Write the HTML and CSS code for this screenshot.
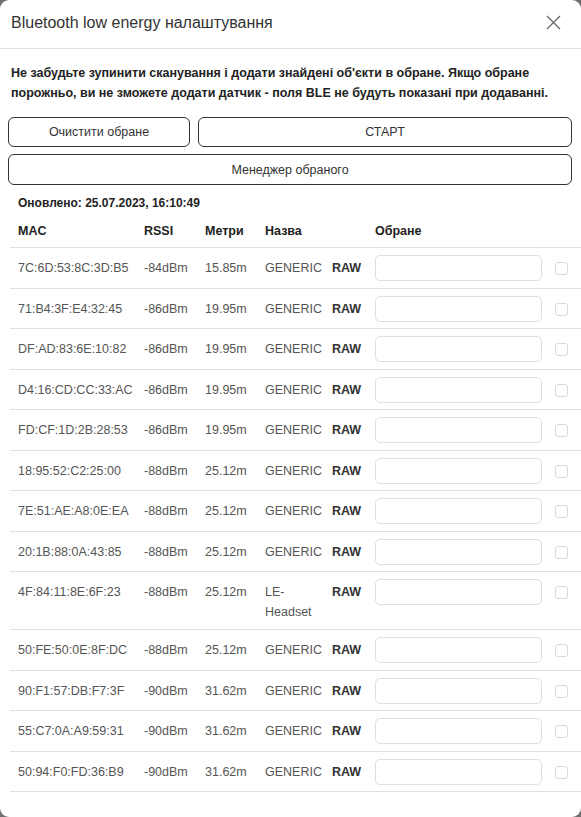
FILE: index.html
```html
<!DOCTYPE html>
<html lang="uk">
<head>
<meta charset="utf-8">
<title>Bluetooth low energy налаштування</title>
<link rel="stylesheet" href="styles.css">
</head>
<body>
<div class="modal">
  <div class="modal-header">
    <div class="modal-title">Bluetooth low energy налаштування</div>
    <button class="close" aria-label="Закрити">
      <svg width="15" height="15" viewBox="0 0 15 15"><path d="M1 1 L14 14 M14 1 L1 14" stroke="#6b6b6b" stroke-width="1.4" fill="none"/></svg>
    </button>
  </div>
  <div class="modal-body">
    <p class="note">Не забудьте зупинити сканування і додати знайдені об'єкти в обране. Якщо обране порожньо, ви не зможете додати датчик - поля BLE не будуть показані при додаванні.</p>
    <div class="btn-row">
      <button class="btn btn-clear">Очистити обране</button>
      <button class="btn btn-start">СТАРТ</button>
    </div>
    <button class="btn btn-block">Менеджер обраного</button>
    <div class="updated">Оновлено: 25.07.2023, 16:10:49</div>
    <table class="devices">
      <colgroup>
        <col class="c-mac"><col class="c-rssi"><col class="c-m"><col class="c-name"><col class="c-raw"><col class="c-in"><col class="c-ck">
      </colgroup>
      <thead>
        <tr><th>MAC</th><th>RSSI</th><th>Метри</th><th>Назва</th><th></th><th>Обране</th><th></th></tr>
      </thead>
      <tbody>
        <tr><td>7C:6D:53:8C:3D:B5</td><td>-84dBm</td><td>15.85m</td><td>GENERIC</td><td class="raw">RAW</td><td class="in"><input type="text"></td><td class="ck"><span class="box"></span></td></tr>
        <tr><td>71:B4:3F:E4:32:45</td><td>-86dBm</td><td>19.95m</td><td>GENERIC</td><td class="raw">RAW</td><td class="in"><input type="text"></td><td class="ck"><span class="box"></span></td></tr>
        <tr><td>DF:AD:83:6E:10:82</td><td>-86dBm</td><td>19.95m</td><td>GENERIC</td><td class="raw">RAW</td><td class="in"><input type="text"></td><td class="ck"><span class="box"></span></td></tr>
        <tr><td>D4:16:CD:CC:33:AC</td><td>-86dBm</td><td>19.95m</td><td>GENERIC</td><td class="raw">RAW</td><td class="in"><input type="text"></td><td class="ck"><span class="box"></span></td></tr>
        <tr><td>FD:CF:1D:2B:28:53</td><td>-86dBm</td><td>19.95m</td><td>GENERIC</td><td class="raw">RAW</td><td class="in"><input type="text"></td><td class="ck"><span class="box"></span></td></tr>
        <tr><td>18:95:52:C2:25:00</td><td>-88dBm</td><td>25.12m</td><td>GENERIC</td><td class="raw">RAW</td><td class="in"><input type="text"></td><td class="ck"><span class="box"></span></td></tr>
        <tr><td>7E:51:AE:A8:0E:EA</td><td>-88dBm</td><td>25.12m</td><td>GENERIC</td><td class="raw">RAW</td><td class="in"><input type="text"></td><td class="ck"><span class="box"></span></td></tr>
        <tr><td>20:1B:88:0A:43:85</td><td>-88dBm</td><td>25.12m</td><td>GENERIC</td><td class="raw">RAW</td><td class="in"><input type="text"></td><td class="ck"><span class="box"></span></td></tr>
        <tr><td>4F:84:11:8E:6F:23</td><td>-88dBm</td><td>25.12m</td><td class="name">LE-<br>Headset</td><td class="raw">RAW</td><td class="in"><input type="text"></td><td class="ck"><span class="box"></span></td></tr>
        <tr><td>50:FE:50:0E:8F:DC</td><td>-88dBm</td><td>25.12m</td><td>GENERIC</td><td class="raw">RAW</td><td class="in"><input type="text"></td><td class="ck"><span class="box"></span></td></tr>
        <tr><td>90:F1:57:DB:F7:3F</td><td>-90dBm</td><td>31.62m</td><td>GENERIC</td><td class="raw">RAW</td><td class="in"><input type="text"></td><td class="ck"><span class="box"></span></td></tr>
        <tr><td>55:C7:0A:A9:59:31</td><td>-90dBm</td><td>31.62m</td><td>GENERIC</td><td class="raw">RAW</td><td class="in"><input type="text"></td><td class="ck"><span class="box"></span></td></tr>
        <tr><td>50:94:F0:FD:36:B9</td><td>-90dBm</td><td>31.62m</td><td>GENERIC</td><td class="raw">RAW</td><td class="in"><input type="text"></td><td class="ck"><span class="box"></span></td></tr>
      </tbody>
    </table>
  </div>
</div>
</body>
</html>
```
FILE: styles.css
```css
* { box-sizing: border-box; }
html, body { margin: 0; padding: 0; }
body {
  background: #707070;
  font-family: "Liberation Sans", Arial, sans-serif;
  color: #333;
  overflow: hidden;
}
.modal {
  width: 581px;
  height: 817px;
  background: #fff;
  border-radius: 9px;
  overflow: hidden;
}
.modal-header {
  height: 49px;
  display: flex;
  align-items: center;
  justify-content: space-between;
  padding: 0 20px 0 11px;
  border-bottom: 1px solid #e2e2e2;
}
.modal-title {
  font-size: 16px;
  color: #333;
  padding-bottom: 2px;
}
.close {
  border: 0;
  background: none;
  padding: 0;
  width: 15px;
  height: 15px;
  display: flex;
  margin-bottom: 3px;
}
.modal-body {
  padding: 14px 0 0 8px;
}
.note {
  margin: 0 9px 0 3px;
  font-size: 12.5px;
  font-weight: bold;
  line-height: 20px;
  color: #222;
}
.btn-row {
  display: flex;
  gap: 8px;
  margin-top: 14px;
  margin-right: 9px;
}
.btn {
  font-family: inherit;
  font-size: 12.5px;
  color: #333;
  background: #fff;
  border: 1px solid #333;
  border-radius: 6px;
  height: 30px;
  padding: 0;
}
.btn-clear { width: 182px; }
.btn-start { flex: 1; }
.btn-block {
  display: block;
  width: 564px;
  height: 31px;
  margin-top: 7px;
}
.updated {
  font-size: 12px;
  font-weight: bold;
  color: #222;
  margin: 10px 0 0 10px;
  line-height: 16px;
}
.devices {
  border-collapse: collapse;
  table-layout: fixed;
  margin-top: 4px;
  margin-left: 2px;
  width: 571px;
  font-size: 12.5px;
}
.c-mac { width: 126px; }
.c-rssi { width: 61px; }
.c-m { width: 60px; }
.c-name { width: 67px; }
.c-raw { width: 43px; }
.c-in { width: 180px; }
.c-ck { width: 34px; }
.devices th {
  text-align: left;
  font-weight: bold;
  color: #222;
  padding: 8px 0 8px 8px;
  line-height: 16px;
  border-bottom: 1px solid #dfe1e6;
}
.devices td {
  color: #555;
  padding: 10px 0 0 8px;
  line-height: 20px;
  vertical-align: top;
  border-bottom: 1px solid #dfe1e6;
  height: 40.5px;
  white-space: nowrap;
}
.devices td.name { white-space: normal; padding-bottom: 7px; }
.devices td.raw { font-weight: bold; color: #333; }
.devices td.in { padding-top: 7px; }
.devices td.ck { padding-top: 14px; padding-left: 8px; }
.devices input {
  display: block;
  width: 167px;
  height: 26px;
  border: 1px solid #dcdfe4;
  border-radius: 5px;
  font: inherit;
  padding: 0 8px;
}
.box {
  display: block;
  width: 13px;
  height: 13px;
  border: 1px solid #d6d9de;
  border-radius: 3px;
}
```
